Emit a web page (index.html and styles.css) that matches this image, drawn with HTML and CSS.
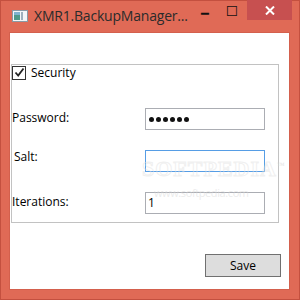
FILE: index.html
```html
<!DOCTYPE html>
<html lang="en">

<head>
    <meta charset="UTF-8" />
    <meta name="viewport" content="width=device-width, initial-scale=1.0" />
    <link rel="stylesheet" href="styles.css">
    <title>XMR1.BackupManager</title>
</head>

<body>

    <!-- window frame -->
    <div class="window">
        <div class="titlebar">
            <svg class="app-icon" width="16" height="12" viewBox="0 0 16 12">
                <rect x="0.5" y="0.5" width="15" height="11" fill="#f4f6f8" stroke="#8a9aa6" />
                <rect x="2" y="2" width="6" height="8" fill="#4f9a8a" />
                <rect x="2" y="2" width="6" height="3" fill="#7fb3cf" />
                <rect x="9" y="2" width="2" height="8" fill="#9fb0bd" />
            </svg>
            <div class="title">XMR1.BackupManager...</div>
            <div class="min-btn">&#9473;</div>
            <div class="max-btn">&#9744;</div>
            <div class="close-btn">
                <svg width="10" height="9" viewBox="0 0 10 9">
                    <path d="M1 0.5 L9 8.5 M9 0.5 L1 8.5" stroke="#fff" stroke-width="2" />
                </svg>
            </div>
        </div>

        <!-- client area -->
        <div class="client">
            <div class="group">
                <label class="check-row">
                    <span class="checkbox">
                        <svg width="11" height="11" viewBox="0 0 11 11">
                            <path d="M1.5 5.5 L4.2 8.5 L9.5 1.5" fill="none" stroke="#222" stroke-width="1.8" />
                        </svg>
                    </span>
                    <span>Security</span>
                </label>

                <div class="field first">
                    <span class="label">Password:</span>
                    <div class="textbox dots">
                        <span class="dot"></span><span class="dot"></span><span class="dot"></span>
                        <span class="dot"></span><span class="dot"></span><span class="dot"></span>
                    </div>
                </div>
                <div class="field">
                    <span class="label salt">Salt:</span>
                    <div class="textbox focused"></div>
                </div>
                <div class="field">
                    <span class="label">Iterations:</span>
                    <div class="textbox">1</div>
                </div>

                <!-- watermark -->
                <div class="wm-big">SOFTPEDIA<sup>™</sup></div>
                <div class="wm-small">www.softpedia.com</div>
            </div>

            <div class="actions">
                <button class="btn">Save</button>
            </div>
        </div>
    </div>

</body>

</html>
```

FILE: styles.css
```css
* {
    box-sizing: border-box;
}

body {
    margin: 0;
    width: 300px;
    height: 300px;
    overflow: hidden;
    font-family: 'Segoe UI', 'Open Sans', sans-serif;
    font-size: 12px;
    color: #000;
}

.window {
    width: 300px;
    height: 300px;
    background-color: #e06a56;
    border: 1px solid #c4503f;
    display: flex;
    flex-direction: column;
}

.titlebar {
    height: 31px;
    display: flex;
    align-items: flex-start;
}

.app-icon {
    flex: none;
    margin: 9px 0 0 11px;
}

.title {
    flex: 1;
    min-width: 0;
    white-space: nowrap;
    margin: 5px 0 0 6px;
    font-size: 14px;
    color: #2b2b2b;
    letter-spacing: -0.2px;
}

/* caption glyphs */
.min-btn,
.max-btn {
    flex: none;
    width: 26px;
    height: 20px;
    text-align: center;
    font-family: 'DejaVu Sans', sans-serif;
    color: #111;
    overflow: hidden;
}

.min-btn {
    font-size: 13px;
    line-height: 25px;
    padding-right: 6px;
}

.max-btn {
    font-size: 14px;
    line-height: 20px;
    padding-right: 4px;
}

.close-btn {
    flex: none;
    width: 45px;
    height: 20px;
    background-color: #c75050;
    display: flex;
    align-items: center;
    justify-content: center;
    margin-right: 7px;
    margin-top: -1px;
}

.client {
    flex: 1;
    background-color: #fff;
    margin: 0 9px 9px 8px;
    border: 1px solid #d4604d;
    display: flex;
    flex-direction: column;
}

.group {
    position: relative;
    margin: 31px 0 0 1px;
    width: 268px;
    height: 159px;
    border: 1px solid #c2c2c2;
}

.check-row {
    display: flex;
    align-items: center;
    gap: 5px;
    height: 15px;
}

.checkbox {
    width: 14px;
    height: 14px;
    border: 1px solid #333;
    display: flex;
    align-items: center;
    justify-content: center;
}

.field {
    display: grid;
    grid-template-columns: 133px 120px;
    align-items: center;
    margin-top: 18px;
}

.field.first {
    margin-top: 28px;
}

.label {
    padding-bottom: 3px;
}

.label.salt {
    padding-left: 2px;
    padding-bottom: 9px;
}

.textbox {
    height: 22px;
    border: 1px solid #abadb3;
    padding: 2px 2px;
    line-height: 16px;
    background-color: transparent;
}

.textbox.focused {
    border-color: #569de5;
}

.textbox.dots {
    display: flex;
    align-items: center;
    gap: 2px;
    padding: 0 0 0 3px;
}

.dot {
    width: 5px;
    height: 5px;
    border-radius: 50%;
    background-color: #111;
}

.wm-big {
    position: absolute;
    left: 130px;
    top: 91px;
    font-family: 'Liberation Serif', serif;
    font-size: 22px;
    font-weight: bold;
    letter-spacing: 1px;
    color: transparent;
    -webkit-text-stroke: 1px rgba(225, 225, 225, 0.5);
}

.wm-big sup {
    font-size: 8px;
    -webkit-text-stroke: 0;
    color: rgba(210, 210, 210, 0.5);
}

.wm-small {
    position: absolute;
    left: 142px;
    top: 120px;
    font-size: 11px;
    color: rgba(215, 215, 215, 0.5);
    letter-spacing: -0.4px;
}

.actions {
    display: flex;
    justify-content: flex-end;
    margin-top: 31px;
    padding-right: 8px;
}

.btn {
    width: 76px;
    height: 23px;
    background-color: #dddddd;
    border: 1px solid #707070;
    border-radius: 0;
    font-family: inherit;
    font-size: 12px;
    color: #000;
    padding: 0;
}
```
